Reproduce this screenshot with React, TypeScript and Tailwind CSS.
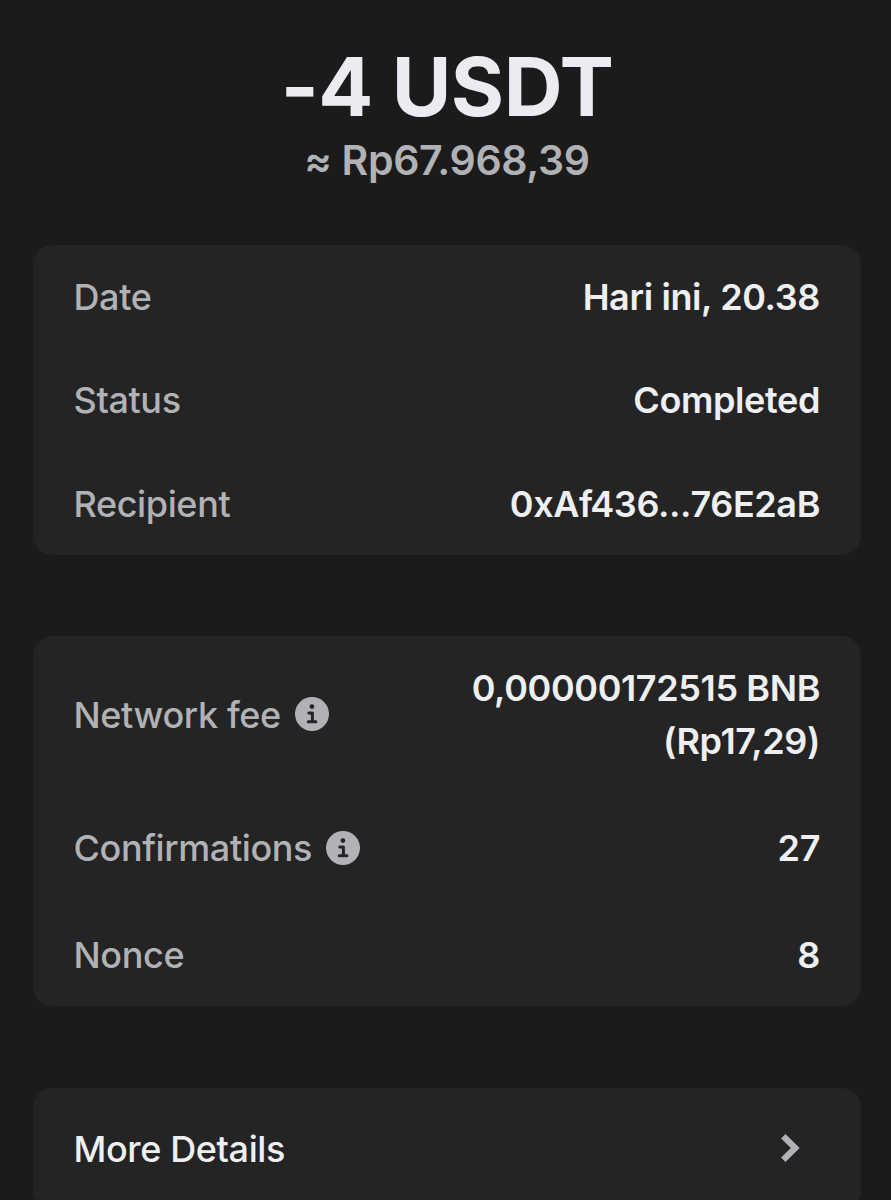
import type { ReactNode } from "react"

function InfoIcon() {
  return (
    <svg viewBox="0 0 34 34" className="mb-[2px] h-[34px] w-[34px] shrink-0">
      <circle cx="17" cy="17" r="17" fill="#b1b2b5" />
      <circle cx="16.9" cy="9.6" r="2.4" fill="#242424" />
      <path
        d="M13.8 15.9h3.6v8.8M13.3 24.8h7.6"
        fill="none"
        stroke="#242424"
        strokeWidth="3"
        strokeLinecap="round"
        strokeLinejoin="round"
      />
    </svg>
  )
}

function Row({ label, info, className, children }: { label: string; info?: boolean; className: string; children: ReactNode }) {
  return (
    <div className={`flex items-center justify-between ${className}`}>
      <div className="flex items-center gap-[14px]">
        <span className="text-[#b1b2b5]">{label}</span>
        {info && <InfoIcon />}
      </div>
      <div className="text-right font-semibold text-[#eeeff1]">{children}</div>
    </div>
  )
}

export default function App() {
  return (
    <div className="h-[1200px] overflow-hidden bg-[#1b1b1b] pr-[30px] pl-[33px] font-['Inter',sans-serif] text-[36px] leading-[53px] font-medium tracking-[-0.38px]">
      <header className="flex h-[245px] flex-col items-center pt-[39px]">
        <h1 className="text-[81.5px] leading-[96px] font-bold tracking-[-0.5px] text-[#ebecf1]">-4 USDT</h1>
        <p className="text-[41px] leading-[50px] font-semibold tracking-[-0.35px] text-[#b1b2b5]">≈ Rp67.968,39</p>
      </header>

      <section className="h-[310px] rounded-[20px] bg-[#242424] pr-[41px] pl-[40.5px]">
        <Row label="Date" className="h-[104px]">Hari ini, 20.38</Row>
        <Row label="Status" className="h-[103px]">Completed</Row>
        <Row label="Recipient" className="h-[104px]">0xAf436...76E2aB</Row>
      </section>

      <section className="mt-[81px] h-[370px] rounded-[20px] bg-[#242424] pr-[41px] pl-[40.5px]">
        <Row label="Network fee" info className="h-[158px]">
          <p>0,00000172515 BNB</p>
          <p>(Rp17,29)</p>
        </Row>
        <Row label="Confirmations" info className="h-[109px]">27</Row>
        <Row label="Nonce" className="h-[105px]">8</Row>
      </section>

      <section className="mt-[82px] flex h-[122px] items-center justify-between rounded-[20px] bg-[#242424] pr-[41px] pl-[40.5px]">
        <span className="text-[#eeeff1]">More Details</span>
        <svg viewBox="0 0 19 28" className="mr-[20px] mb-[2px] h-[28px] w-[19px]" fill="none" stroke="#b1b2b5" strokeWidth="6.2">
          <path d="M2.3 2.2 14.3 14 2.3 25.8" />
        </svg>
      </section>
    </div>
  )
}
